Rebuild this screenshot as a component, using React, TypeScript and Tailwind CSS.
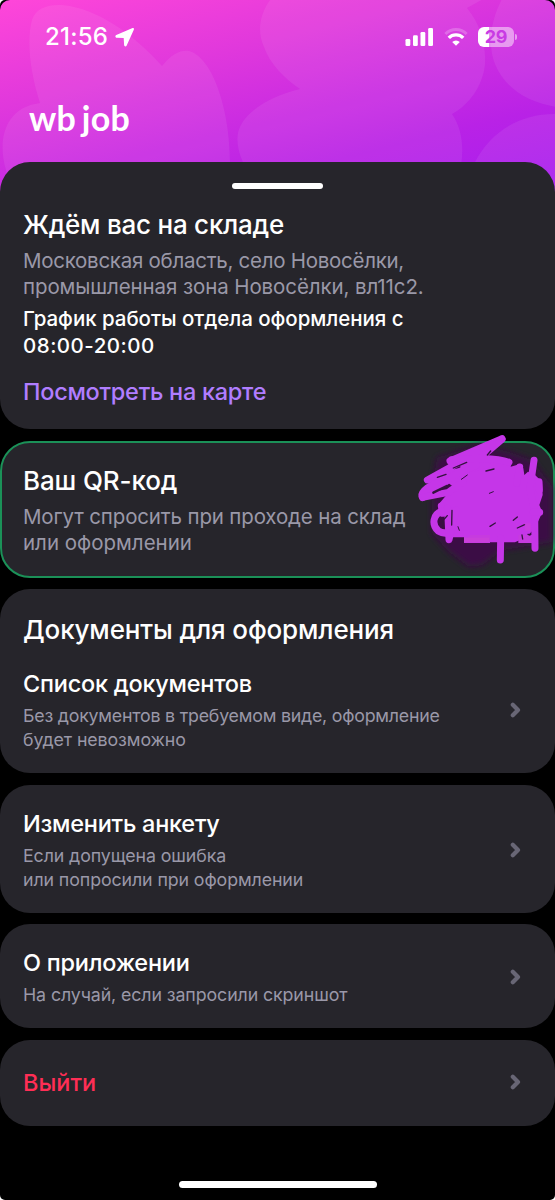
import React from 'react';

const Chevron = () => (
  <svg className="w-[11px] h-4 shrink-0 -mt-px" viewBox="0 0 11 16" fill="none">
    <path d="M2.8 2.7 8 8l-5.2 5.3" stroke="#686675" strokeWidth="4.2" strokeLinecap="round" strokeLinejoin="round" />
  </svg>
);

const StatusBar = () => (
  <div className="relative flex items-center justify-between h-[74px] pl-[45px] pr-[38px] text-white">
    <div className="flex items-center gap-[7px]">
      <span className="text-[24px] leading-[30px] font-medium tracking-[0.25px]">21:56</span>
      <svg className="w-[20px] h-[20px]" viewBox="0 0 20 20" fill="currentColor">
        <path d="M17.6 1.1 1.3 8.1C-.1 8.8.2 10.6 1.7 10.7l7 .3.4 7.1c.1 1.6 2 1.9 2.6.5l7.1-15.9c.4-1.1-.2-2-1.2-1.6Z" />
      </svg>
    </div>
    <div className="flex items-center">
      <svg className="w-[29px] h-[18px]" viewBox="0 0 29 18" fill="currentColor">
        <rect x="0.5" y="11" width="4.8" height="7" rx="1.3" />
        <rect x="8" y="7.3" width="4.8" height="10.7" rx="1.3" />
        <rect x="15.5" y="4" width="4.8" height="14" rx="1.3" />
        <rect x="23.2" y="0" width="4.8" height="18" rx="1.3" />
      </svg>
      <svg className="w-[24px] h-[18px] ml-[10px]" viewBox="0 0 24 18" fill="none" stroke="currentColor">
        <path d="M1.4 6a15 15 0 0 1 21.2 0" strokeWidth="3" opacity="0.22" />
        <path d="M4.8 9.9a10.2 10.2 0 0 1 14.4 0" strokeWidth="3.4" />
        <path d="M12 17.8 8.2 14a5.5 5.5 0 0 1 7.6 0Z" fill="currentColor" stroke="none" />
      </svg>
      <div className="flex items-center ml-[10px]">
        <div className="flex items-center justify-center w-9 h-5 rounded-[6px] bg-[linear-gradient(90deg,#fff_10.5px,rgba(255,255,255,0.48)_10.5px)] text-[18px] leading-5 font-bold text-[#c93be4] tracking-[-0.2px]">
          29
        </div>
        <div className="w-[2px] h-[6px] ml-[1px] rounded-r-full bg-white/50" />
      </div>
    </div>
  </div>
);

const HeaderPattern = () => (
  <svg className="absolute left-0 top-0 w-[555px] h-[220px]" viewBox="0 0 555 220" fill="#fff" fillOpacity="0.07">
    <path d="M40 103C31 75 26 42 32 20c6-19 34-18 58-8 30 12 56 36 72 54 10-12 18-16 27-15 25 7 41 62 41 111v58H20l-14-50C-2 144 2 108 40 103Z" />
    <path d="M280 -10C262 4 255 28 264 47c6 17 20 31 36 42-30 7-58 24-62 44-3 16 6 35 18 50h200c9-23 9-50-4-69 17-9 31-28 33-50 1-21-5-40-18-56l18-10Z" />
    <path d="M505 -6c-14 22-18 50-10 70 10 25 34 39 62 43V-6Z" />
    <path d="M557 114c-36-1-66 17-82 48v50h82Z" />
  </svg>
);

// Marker strokes hiding the code
const Scribble = () => (
  <svg className="absolute right-[-2px] top-[-18px] w-[155px] h-[165px]" viewBox="0 0 465 495" fill="none">
    <defs>
      <filter id="glow" x="-20%" y="-20%" width="140%" height="140%">
        <feGaussianBlur stdDeviation="9" />
      </filter>
    </defs>
    <path
      d="M112 98 245 58l90 26 60 22 62 80v165l-75 12-75 12-60 45-40 5-60-45-50-55V180Z"
      fill="#3a0f45"
      filter="url(#glow)"
    />
    <path
      d="M150 108 180 96 320 100 334 116 332 125 358 118 370 130 373 150 384 140 405 150 426 170 428 210 418 240 427 262 414 290 395 320 375 338 345 352H192V335L150 320V262L114 240 144 205 158 184 140 170 190 130Z"
      fill="#c536e8"
    />
    <path d="M192 330h78v24h-78zM355 330h42v24h-42z" fill="#c63bdf" />
    <g stroke="#c536e8" strokeWidth="21" strokeLinecap="round" strokeLinejoin="round">
      <path d="M150 108 306 41 82 165 260 118" />
      <path d="M306 43 242 98 68 218C58 205 80 188 100 178L230 120" />
      <path d="M68 217 145 202 190 170" />
      <path d="M155 104C210 98 290 98 327 112" />
      <path d="M124 243 128 265" />
      <path d="M128 258C98 266 94 300 115 318 130 328 160 326 200 326" />
      <path d="M143 250 147 344 168 255" />
      <path d="M302 340 301 405" />
      <path d="M402 106 390 190 404 260 405 370" />
      <path d="M359 126 350 175" />
      <path d="M417 170 418 195M400 262 419 262" />
    </g>
    <g stroke="#34133f" strokeWidth="4" strokeLinecap="round">
      <path d="M160 129 200 112M112 157 138 148M258 138 282 132M270 304 286 294M340 286 352 276M352 309 374 299" />
      <path d="M272 78 262 90M142 272 133 282M156 256 155 300M128 288 128 308" />
      <path d="M366 330 368 342M384 328 390 330" />
      <path d="M100 203 140 183" strokeWidth="7" />
      <path d="M184 163 202 150M268 205 280 200M174 305 178 316" strokeWidth="3" />
    </g>
    <path d="M374 295h18v22h-18zM192 338h76v14h-76z" fill="#cf49d3" opacity="0.4" />
  </svg>
);

interface MenuItemProps {
  title: string;
  children?: React.ReactNode;
  titleClass?: string;
}

const MenuItem = ({ title, children, titleClass = 'text-white tracking-[-0.25px]' }: MenuItemProps) => (
  <div className="flex items-center justify-between">
    <div>
      <h3 className={`text-[23.5px] leading-[30px] font-medium ${titleClass}`}>{title}</h3>
      {children && (
        <p className="mt-[5px] text-[17.8px] leading-[24px] tracking-[-0.1px] text-[#9a98a8] whitespace-nowrap">
          {children}
        </p>
      )}
    </div>
    <Chevron />
  </div>
);

const App = () => {
  return (
    <div className="bg-white w-[555px] h-[1200px]">
      <div className="relative w-[555px] h-[1200px] overflow-hidden rounded-[5px] bg-black font-['Inter',sans-serif]">
        <header className="relative h-[162px]">
          <div className="absolute inset-x-0 top-0 h-[200px] overflow-hidden rounded-t-[10px] bg-[linear-gradient(166deg,#ff46d9_0%,#e038dc_32%,#b922e6_72%,#a51df0_100%)]">
            <HeaderPattern />
          </div>
          <StatusBar />
          <div className="relative pl-[29px] pt-[22px] font-['Lato',sans-serif] text-[34px] leading-[44px] font-bold text-white tracking-[0.3px] [word-spacing:-3px]">
            wb job
          </div>
        </header>

        <main className="relative flex flex-col gap-[11.5px]">
          <section className="h-[267px] rounded-[30px] bg-[#26252b] px-[23px] pt-[21px]">
            <div className="mx-auto w-[91px] h-[6px] rounded-full bg-white" />
            <h2 className="mt-[20px] text-[26px] leading-[32px] font-medium tracking-[-0.24px] text-white">
              Ждём вас на складе
            </h2>
            <p className="mt-[7px] text-[20.5px] leading-[26px] text-[#9a98a8] whitespace-nowrap">
              <span className="tracking-[-0.27px]">Московская область, село Новосёлки,</span>
              <br />
              <span className="tracking-[-0.1px]">промышленная зона Новосёлки, вл11с2.</span>
            </p>
            <p className="mt-[5px] text-[20.5px] leading-[27px] font-medium text-white whitespace-nowrap">
              <span className="tracking-[-0.04px]">График работы отдела оформления с</span>
              <br />
              <span className="tracking-[0.5px]">08:00-20:00</span>
            </p>
            <a className="block mt-[18px] text-[23.5px] leading-[30px] font-medium tracking-[-0.27px] text-[#b07dff]">
              Посмотреть на карте
            </a>
          </section>

          <section className="relative h-[137px] rounded-[30px] border-2 border-[#1b9158] bg-[#26252b] px-[21px] pt-[22px]">
            <h2 className="text-[26px] leading-[32px] font-medium tracking-[-0.12px] text-white">Ваш QR-код</h2>
            <p className="mt-[7px] text-[20.5px] leading-[26px] tracking-[-0.15px] text-[#9a98a8] whitespace-nowrap">
              Могут спросить при проходе на склад
              <br />
              <span className="tracking-normal">или оформлении</span>
            </p>
            <Scribble />
          </section>

          <section className="h-[184px] rounded-[30px] bg-[#26252b] pl-[23px] pr-[34px] pt-[25px]">
            <h2 className="mb-[23px] text-[26px] leading-[32px] font-medium tracking-[-0.13px] text-white">
              Документы для оформления
            </h2>
            <MenuItem title="Список документов">
              <span className="tracking-[-0.22px]">Без документов в требуемом виде, оформление</span>
              <br />
              будет невозможно
            </MenuItem>
          </section>

          <section className="h-[128px] rounded-[30px] bg-[#26252b] pl-[23px] pr-[34px] pt-[24px]">
            <MenuItem title="Изменить анкету">
              Если допущена ошибка
              <br />
              или попросили при оформлении
            </MenuItem>
          </section>

          <section className="h-[104px] rounded-[30px] bg-[#26252b] pl-[23px] pr-[34px] pt-[24px]">
            <MenuItem title="О приложении">На случай, если запросили скриншот</MenuItem>
          </section>

          <section className="h-[86px] rounded-[30px] bg-[#26252b] pl-[23px] pr-[34px] pt-[28px]">
            <MenuItem title="Выйти" titleClass="text-[#ff2e55]" />
          </section>
        </main>

        <div className="mx-auto mt-[55.5px] w-[198px] h-[7px] rounded-full bg-white" />
      </div>
    </div>
  );
};

export default App;
